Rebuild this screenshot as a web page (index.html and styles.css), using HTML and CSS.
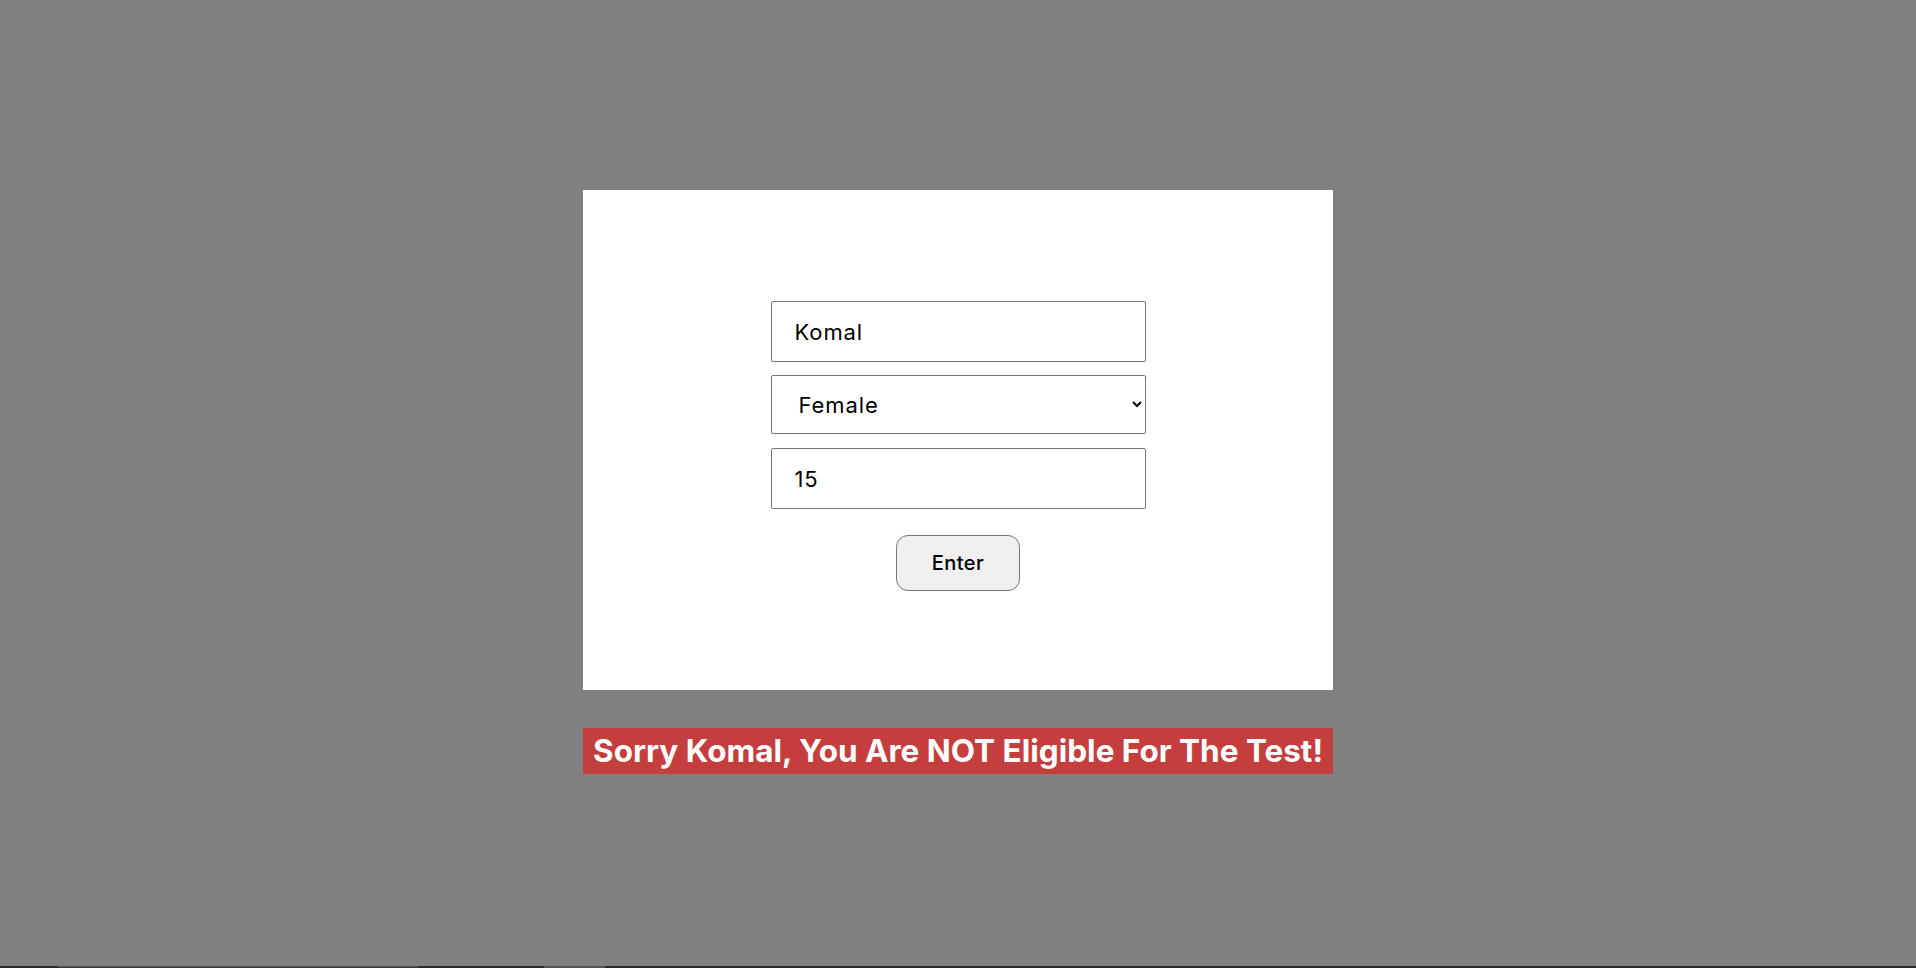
FILE: index.html
```html
<!DOCTYPE html>
<html lang="en">
<head>
<meta charset="utf-8">
<title>Eligibility</title>
<link rel="stylesheet" href="styles.css">
</head>
<body>
<main class="page">
  <section class="card">
    <form class="form">
      <input class="field" type="text" value="Komal">
      <select class="field field-select">
        <option>Female</option>
        <option>Male</option>
      </select>
      <input class="field" type="text" value="15">
      <button class="btn" type="button">Enter</button>
    </form>
  </section>
  <p class="banner">Sorry Komal, You Are NOT Eligible For The Test!</p>
</main>
<footer class="taskbar">
  <span class="seg seg-dark seg-a"></span>
  <span class="seg seg-mid seg-b"></span>
  <span class="seg seg-dark seg-c"></span>
  <span class="seg seg-grey seg-d"></span>
  <span class="seg seg-dark seg-e"></span>
</footer>
</body>
</html>
```
FILE: styles.css
```css
* { box-sizing: border-box; }
html, body { margin: 0; padding: 0; }
body {
  height: 100vh;
  background: #808080;
  display: flex;
  flex-direction: column;
  font-family: "Inter", "Noto Sans", sans-serif;
  overflow: hidden;
}
.page {
  flex: 1;
  display: flex;
  flex-direction: column;
  align-items: center;
  padding-top: 190px;
}
.card {
  width: 750px;
  height: 500px;
  background: #ffffff;
  padding-top: 111px;
}
.form {
  display: flex;
  flex-direction: column;
  align-items: center;
}
.field {
  width: 375px;
  height: 61px;
  border: 1px solid #767676;
  border-radius: 2px;
  background: #fff;
  padding: 0 23px;
  font-family: "Inter", "Noto Sans", sans-serif;
  font-size: 22px;
  letter-spacing: 0.9px;
  color: #000;
  outline: none;
}
.field + .field { margin-top: 13px; }
.field-select {
  height: 59px;
  padding-left: 23px;
  padding-right: 4px;
  margin-bottom: 1px;
}
.btn {
  margin-top: 26px;
  width: 124px;
  height: 56px;
  border: 1px solid #767676;
  border-radius: 12px;
  background: #efefef;
  font-family: "Inter", "Noto Sans", sans-serif;
  font-size: 20px;
  font-weight: 500;
  letter-spacing: 0.5px;
  color: #000;
}
.banner {
  margin: 38px 0 0;
  width: 750px;
  height: 46px;
  line-height: 46px;
  padding: 0 10px;
  background: #c53e3e;
  color: #fff;
  font-size: 31.5px;
  font-weight: 700;
  white-space: nowrap;
}
.taskbar {
  height: 2px;
  display: flex;
}
.seg { height: 2px; }
.seg-dark { background: #2b2b2b; }
.seg-mid { background: #3a3a3a; border-top: 1px solid #555; }
.seg-grey { background: #555555; }
.seg-a { width: 58px; }
.seg-b { width: 360px; }
.seg-c { width: 126px; }
.seg-d { width: 61px; }
.seg-e { flex: 1; }
```
